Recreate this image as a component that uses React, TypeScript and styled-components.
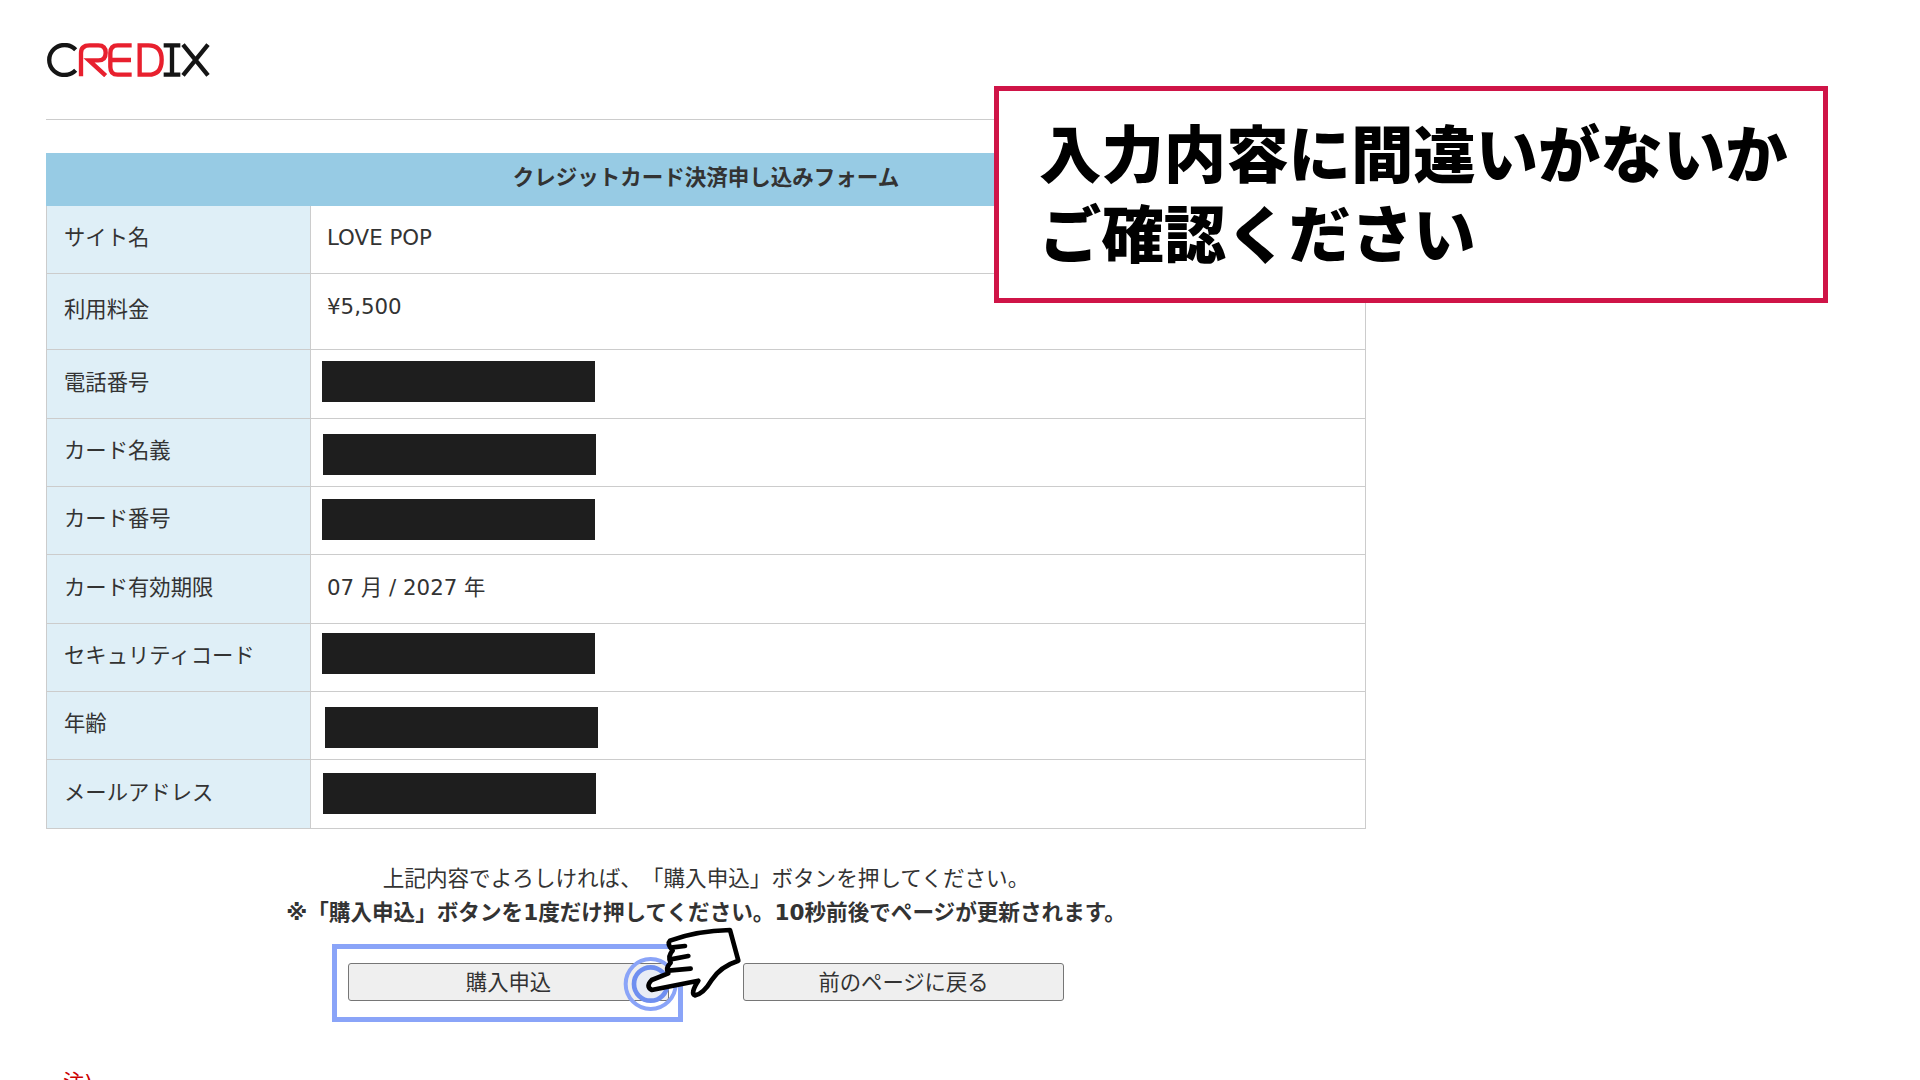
import React from 'react';
import styled, { createGlobalStyle } from 'styled-components';

const FONT = `"DejaVu Sans", "Noto Sans CJK JP", sans-serif`;

const GlobalStyle = createGlobalStyle`
  html, body {
    margin: 0;
    height: 1080px;
    overflow: hidden;
    background: #fff;
    font-family: ${FONT};
    color: #333;
    text-spacing-trim: space-all;
  }
`;

const Page = styled.div`
  position: relative;
  width: 1920px;
  height: 1080px;
  padding: 43px 0 0 46px;
  box-sizing: border-box;
  overflow: hidden;
`;

const Logo = styled.svg`
  display: block;
  width: 164px;
  height: 34px;
`;

const Rule = styled.hr`
  width: 1320px;
  margin: 42px 0 33px;
  border: 0;
  border-top: 1px solid #ccc;
`;

const FormTable = styled.table`
  width: 1320px;
  border-collapse: collapse;
  table-layout: fixed;
  font-size: 21.33px;
  line-height: 30px;
`;

const LabelCol = styled.col`
  width: 264px;
`;

const HeadCell = styled.th`
  height: 52px;
  padding: 0 0 3px;
  box-sizing: border-box;
  background: #97cbe4;
  border: 1px solid #97cbe4;
  font-size: 21.5px;
  font-weight: 700;
  color: #333;
`;

const Row = styled.tr<{ $height: number }>`
  height: ${p => p.$height}px;
`;

const Label = styled.td`
  padding: 0 0 3px 17px;
  background: #dfeff7;
  border: 1px solid #ccc;
`;

const Value = styled.td<{ $pad: number }>`
  padding: 0 0 ${p => p.$pad}px 16px;
  border: 1px solid #ccc;
`;

const Redacted = styled.div<{ $shift: number; $drop: number }>`
  width: 273px;
  height: 41px;
  margin: ${p => p.$drop}px 0 0 ${p => p.$shift - 16}px;
  background: #1e1e1e;
`;

const Notes = styled.div`
  width: 1320px;
  margin-top: 33px;
  text-align: center;
  font-size: 21.6px;
  line-height: 34px;
`;

const Strong = styled.p`
  margin: 0;
  font-weight: 700;
`;

const Plain = styled.p`
  margin: 0;
`;

const Buttons = styled.div`
  display: flex;
  gap: 74px;
  margin: 33px 0 0 302px;
`;

const FormButton = styled.button`
  width: 321px;
  height: 38px;
  padding: 0 0 4px;
  background: #efefef;
  border: 1px solid #767676;
  border-radius: 3px;
  font-family: ${FONT};
  font-size: 21.33px;
  color: #333;
`;

const Attention = styled.p`
  margin: 67px 0 0 17px;
  font-size: 21.33px;
  line-height: 30px;
  color: #c00;
`;

const Callout = styled.div`
  position: absolute;
  left: 994px;
  top: 86px;
  width: 834px;
  height: 217px;
  box-sizing: border-box;
  padding: 26px 0 0 40px;
  background: #fff;
  border: 5px solid #cf1447;
  font-size: 62.4px;
  line-height: 80px;
  font-weight: 900;
  color: #000;
`;

const HighlightBox = styled.div`
  position: absolute;
  left: 332px;
  top: 944px;
  width: 351px;
  height: 78px;
  box-sizing: border-box;
  border: 5px solid #8aa4f8;
`;

const Pointer = styled.svg`
  position: absolute;
  left: 620px;
  top: 920px;
  width: 150px;
  height: 120px;
`;

const rows = [
  { label: 'サイト名', height: 68, value: 'LOVE POP', pad: 3 },
  { label: '利用料金', height: 76, value: '¥5,500', pad: 10 },
  { label: '電話番号', height: 69, shift: 11, drop: 2 },
  { label: 'カード名義', height: 68, shift: 12, drop: 12 },
  { label: 'カード番号', height: 68, shift: 11, drop: 5 },
  { label: 'カード有効期限', height: 69, value: '07 月 / 2027 年', pad: 3 },
  { label: 'セキュリティコード', height: 68, shift: 11, drop: 0 },
  { label: '年齢', height: 68, shift: 14, drop: 12 },
  { label: 'メールアドレス', height: 69, shift: 12, drop: 7 }
];

const App = () => (
  <Page>
    <GlobalStyle />
    <Logo viewBox="0 0 490 102" fill="none" strokeWidth="13">
      <g stroke="#151515">
        <path d="M88 20 A46 45 0 1 0 88 82" />
        <path d="M352 7 H402 M352 95 H402 M377 7 V95" />
        <path d="M410 5 L485 97 M485 5 L410 97" />
      </g>
      <g stroke="#e8202e">
        <path d="M104 100 V30 Q104 7 130 7 H156 Q178 7 178 29 Q178 52 156 52 H128 L178 98" />
        <path d="M256 7 H214 Q192 7 192 30 V72 Q192 95 214 95 H256 M198 51 H254" />
        <path d="M280 7 H306 Q346 7 346 50 Q346 95 306 95 H280 Z" />
      </g>
    </Logo>
    <Rule />
    <FormTable>
      <colgroup>
        <LabelCol />
        <col />
      </colgroup>
      <thead>
        <tr>
          <HeadCell colSpan={2}>クレジットカード決済申し込みフォーム</HeadCell>
        </tr>
      </thead>
      <tbody>
        {rows.map(row => (
          <Row key={row.label} $height={row.height}>
            <Label>{row.label}</Label>
            <Value $pad={row.pad ?? 8}>
              {row.value ?? <Redacted $shift={row.shift ?? 11} $drop={row.drop ?? 0} />}
            </Value>
          </Row>
        ))}
      </tbody>
    </FormTable>
    <Notes>
      <Plain>上記内容でよろしければ、「購入申込」ボタンを押してください。</Plain>
      <Strong>※「購入申込」ボタンを1度だけ押してください。10秒前後でページが更新されます。</Strong>
    </Notes>
    <Buttons>
      <FormButton>購入申込</FormButton>
      <FormButton>前のページに戻る</FormButton>
    </Buttons>
    <Attention>注)</Attention>
    <Callout>
      入力内容に間違いがないか
      <br />
      ご確認ください
    </Callout>
    <HighlightBox />
    <Pointer viewBox="0 0 450 360" fill="none">
      <circle cx="92" cy="192" r="50" fill="#e6ebf8" fillOpacity="0.7" stroke="#6f8ff0" strokeWidth="14" />
      <circle cx="92" cy="192" r="75" stroke="#8aa4f8" strokeWidth="12" />
      <path
        d="M150 62 Q230 32 330 30 L355 122 Q300 140 275 180 Q250 222 225 226 Q210 220 235 182 L95 210 Q76 200 95 180 L145 160 Q135 146 152 128 Q142 108 158 92 Q140 72 150 62 Z"
        fill="#fff"
        stroke="#000"
        strokeWidth="14"
        strokeLinejoin="round"
      />
      <path d="M158 82 L195 78 M152 118 L205 108 M145 152 L212 146" stroke="#000" strokeWidth="14" strokeLinecap="round" />
    </Pointer>
  </Page>
);

export default App;
